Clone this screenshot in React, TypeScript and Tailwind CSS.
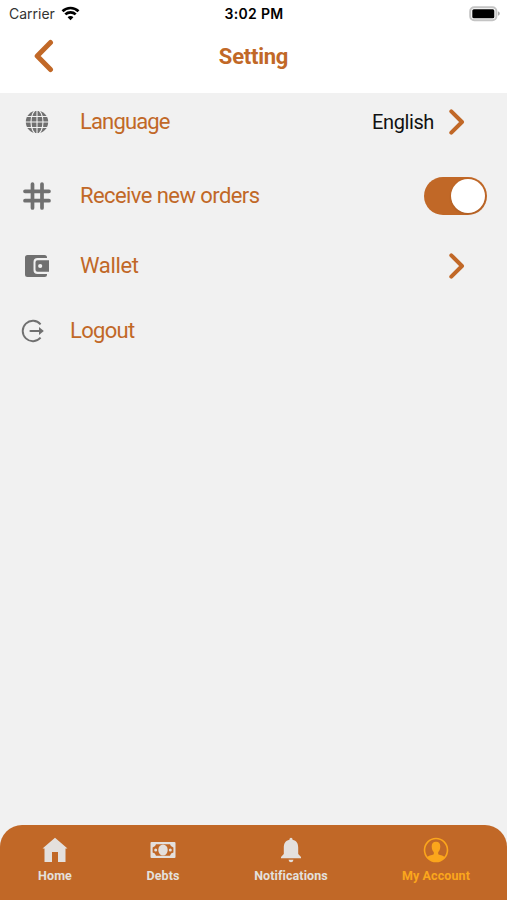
import type { ReactNode } from 'react';

function WifiIcon() {
  return (
    <svg width="19" height="15" viewBox="0 0 19 15" fill="none" stroke="#000" strokeWidth="2.7">
      <path d="M1.5 5.2C6 .9 13 .9 17.5 5.2" />
      <path d="M4.3 8.4C7.2 5.6 11.8 5.6 14.7 8.4" />
      <path d="M9.5 14.2 6.6 11.3C8.2 9.7 10.8 9.7 12.4 11.3Z" fill="#000" stroke="none" />
    </svg>
  );
}

function BatteryIcon() {
  return (
    <svg width="32" height="16" viewBox="0 0 32 16">
      <rect x="1.2" y="1.2" width="26.2" height="13" rx="4" fill="#fff" stroke="#c4c4c4" strokeWidth="2" />
      <rect x="3.3" y="3.2" width="22" height="9" rx="1.5" fill="#000" />
      <path d="M29 5.5C31.4 6.2 31.4 9 29 9.7Z" fill="#aaa" />
    </svg>
  );
}

function GlobeIcon() {
  return (
    <svg width="24" height="24" viewBox="0 0 24 24">
      <circle cx="12" cy="12" r="11.2" fill="#707070" />
      <g fill="none" stroke="#f1f1f1" strokeWidth="1.1">
        <path d="M12 0V24M0 12H24M2 6.5H22M2 17.5H22" />
        <ellipse cx="12" cy="12" rx="6" ry="12" />
      </g>
    </svg>
  );
}

function HashIcon() {
  return (
    <svg width="28" height="28" viewBox="0 0 28 28" fill="none" stroke="#707070" strokeWidth="3.7">
      <path d="M9.5 2V26M19 2V26M2 9.3H26M2 18.7H26" strokeLinecap="round" />
    </svg>
  );
}

function WalletIcon() {
  return (
    <svg width="26" height="24" viewBox="0 0 26 24">
      <path
        d="M3.5 1H20.5Q23 1 23 3.5V4H13.5Q9.5 4 9.5 8V16Q9.5 20 13.5 20H23V20.5Q23 23 20.5 23H3.5Q1 23 1 20.5V3.5Q1 1 3.5 1Z"
        fill="#707070"
      />
      <path
        fillRule="evenodd"
        d="M13.5 6.2H25V17.8H13.5Q11.5 17.8 11.5 15.8V8.2Q11.5 6.2 13.5 6.2ZM16.2 9.9A2.1 2.1 0 0 0 16.2 14.1A2.1 2.1 0 0 0 16.2 9.9Z"
        fill="#707070"
      />
    </svg>
  );
}

function LogoutIcon() {
  return (
    <svg width="24" height="24" viewBox="0 0 24 24" fill="none" stroke="#707070" strokeWidth="1.9">
      <path d="M19.6 5.3A10.2 10.2 0 1 0 19.6 18.7" />
      <path d="M9.5 12H20" strokeWidth="2.2" strokeLinecap="round" />
      <path d="M18 8 22.8 12 18 16Z" fill="#707070" stroke="none" />
    </svg>
  );
}

function Chevron() {
  return (
    <svg width="16" height="26" viewBox="0 0 16 26" fill="none" stroke="#c16827" strokeWidth="4">
      <path d="M2.3 2.3 13 13 2.3 23.7" strokeLinecap="round" strokeLinejoin="round" />
    </svg>
  );
}

function HomeIcon() {
  return (
    <svg width="26" height="26" viewBox="0 0 26 26" fill="#e4e0dd">
      <path d="M13 .8 25.5 11.5H23.5V25H16V15H10V25H2.5V11.5H.5Z" />
    </svg>
  );
}

function DebtsIcon() {
  return (
    <svg width="26" height="18" viewBox="0 0 26 18">
      <rect x=".5" y="1" width="25" height="16" rx="1" fill="#e4e0dd" />
      <path d="M6 3.2H20A4 4 0 0 0 23.4 6.4V11.6A4 4 0 0 0 20 14.8H6A4 4 0 0 0 2.6 11.6V6.4A4 4 0 0 0 6 3.2Z" fill="#c16827" />
      <ellipse cx="13" cy="9" rx="4.7" ry="5.6" fill="#e4e0dd" />
      <circle cx="5.7" cy="9" r="1.5" fill="#e4e0dd" />
      <circle cx="20.3" cy="9" r="1.5" fill="#e4e0dd" />
    </svg>
  );
}

function BellIcon() {
  return (
    <svg width="22" height="26" viewBox="0 0 22 26" fill="#e4e0dd">
      <path d="M11 .7Q12.6 .7 12.6 2.7C16.6 3.5 18.2 6.7 18.2 10.5V17L21 20V21.3H1V20L3.8 17V10.5C3.8 6.7 5.4 3.5 9.4 2.7Q9.4 .7 11 .7Z" />
      <path d="M8.5 22.7H13.5Q13 25.3 11 25.3T8.5 22.7Z" />
    </svg>
  );
}

function AccountIcon() {
  return (
    <svg width="26" height="26" viewBox="0 0 26 26">
      <circle cx="13" cy="13" r="11.5" fill="none" stroke="#fba61c" strokeWidth="1.6" />
      <path
        d="M13 4.8C16 4.8 17.3 6.7 17.3 9.5C17.3 12.5 16 14.3 15.2 15.2V17C15.7 18.2 20.2 18 21.7 20.2A11.5 11.5 0 0 1 4.3 20.2C5.8 18 10.3 18.2 10.8 17V15.2C10 14.3 8.7 12.5 8.7 9.5C8.7 6.7 10 4.8 13 4.8Z"
        fill="#fba61c"
      />
    </svg>
  );
}

type NavItemProps = {
  icon: ReactNode;
  label: string;
  className: string;
};

function NavItem({ icon, label, className }: NavItemProps) {
  return (
    <button className={`flex flex-col items-center ${className}`}>
      <span className="flex h-[26px] items-center">{icon}</span>
      <span className="mt-[4px] text-[12.5px] leading-[17px] font-bold tracking-[0.1px] whitespace-nowrap">{label}</span>
    </button>
  );
}

export default function App() {
  return (
    <div className="flex h-[900px] w-[507px] flex-col overflow-hidden bg-[#f1f1f1] font-['Roboto',sans-serif] text-[#c16827]">
      <header className="h-[93px] bg-white">
        {/* Status bar */}
        <div className="grid h-[27px] grid-cols-3 items-center pr-[6px] pl-[9px] font-['Inter',sans-serif] text-[14px] text-black">
          <div className="flex items-center gap-[6px]">
            <span className="text-[#333]">Carrier</span>
            <WifiIcon />
          </div>
          <span className="-ml-[2px] text-center font-semibold tracking-[0.35px]">3:02 PM</span>
          <div className="flex justify-end">
            <BatteryIcon />
          </div>
        </div>
        {/* Title bar */}
        <div className="grid h-[58px] grid-cols-3 items-center">
          <button className="pl-[34px]">
            <svg width="20" height="34" viewBox="0 0 20 34" fill="none" stroke="#c16827" strokeWidth="5">
              <path d="M16.5 3.5 3.2 17 16.5 30.5" strokeLinecap="round" strokeLinejoin="round" />
            </svg>
          </button>
          <h1 className="text-center text-[22px] font-bold tracking-[-0.25px]">Setting</h1>
        </div>
      </header>

      <main className="flex-1 text-[22px]">
        <div className="flex h-[57px] items-center">
          <div className="flex w-20 pl-[25px]">
            <GlobeIcon />
          </div>
          <span className="tracking-[-0.85px]">Language</span>
          <span className="ml-auto text-[20px] tracking-[-0.4px] text-[#111]">English</span>
          <div className="mr-[42px] ml-[15px]">
            <Chevron />
          </div>
        </div>
        <div className="flex h-[91px] items-center">
          <div className="flex w-20 pl-[23px]">
            <HashIcon />
          </div>
          <span className="tracking-[-0.58px]">Receive new orders</span>
          <button
            role="switch"
            aria-checked="true"
            className="mr-5 ml-auto flex h-[38px] w-[63px] items-center justify-end rounded-full bg-[#c16827] pr-[2px]"
          >
            <span className="size-[34px] rounded-full bg-white shadow-sm" />
          </button>
        </div>
        <div className="flex h-[49px] items-center">
          <div className="flex w-20 pl-6">
            <WalletIcon />
          </div>
          <span className="tracking-[-0.35px]">Wallet</span>
          <div className="mr-[42px] ml-auto">
            <Chevron />
          </div>
        </div>
        <div className="flex h-[81px] items-center">
          <div className="flex w-[70px] pl-[21px]">
            <LogoutIcon />
          </div>
          <span className="tracking-[-0.7px]">Logout</span>
        </div>
      </main>

      <nav className="flex h-[75px] items-start rounded-t-[22px] bg-[#c16827] pt-[12px] text-[#e4e0dd]">
        <NavItem icon={<HomeIcon />} label="Home" className="w-[110px]" />
        <NavItem icon={<DebtsIcon />} label="Debts" className="w-[106px]" />
        <NavItem icon={<BellIcon />} label="Notifications" className="w-[150px]" />
        <NavItem icon={<AccountIcon />} label="My Account" className="w-[140px] text-[#fba61c]" />
      </nav>
    </div>
  );
}
